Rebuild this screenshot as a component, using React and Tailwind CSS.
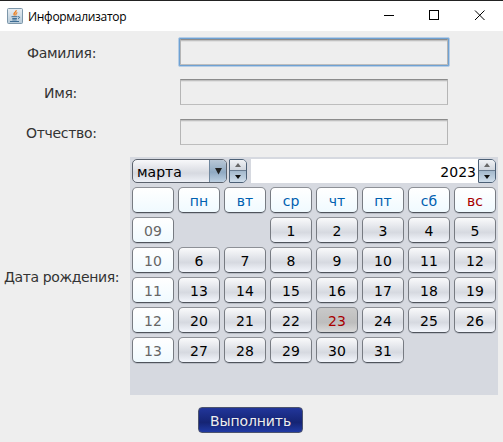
const FONT = "font-['DejaVu_Sans',Verdana,sans-serif]";

const BTN =
  "flex h-[26px] w-[42px] items-center justify-center rounded-[5px] border border-t-[#8d9096] border-x-[#777b82] border-b-[#4f545c] pt-[2px] text-[14px] leading-none shadow-[0_1px_0_#b9bdc5]";
const PALE = "bg-gradient-to-b from-white to-[#f0faff]";
const SILVER = "bg-[linear-gradient(#fafafb_0%,#e5e7ec_35%,#d6d9e0_60%,#f3f6fc_100%)]";
const SELECTED = "bg-[linear-gradient(#c9c9c9_0%,#bdbdbd_60%,#dadada_100%)]";

const days = ["пн", "вт", "ср", "чт", "пт", "сб", "вс"];
const weeks = [
  ["09", "", "", 1, 2, 3, 4, 5],
  ["10", 6, 7, 8, 9, 10, 11, 12],
  ["11", 13, 14, 15, 16, 17, 18, 19],
  ["12", 20, 21, 22, 23, 24, 25, 26],
  ["13", 27, 28, 29, 30, 31, "", ""],
];

function JavaIcon() {
  return (
    <svg width="16" height="16" viewBox="0 0 16 16">
      <defs>
        <linearGradient id="tile" x1="0" y1="0" x2="0" y2="1">
          <stop offset="0" stopColor="#e8eef3" />
          <stop offset="1" stopColor="#b5c9d8" />
        </linearGradient>
      </defs>
      <rect x=".5" y=".5" width="15" height="15" rx="1" fill="url(#tile)" stroke="#7d97aa" />
      <path d="M9.200 2.200C9.800 4.200 5.200 4.800 7.500 7.500M10.300 4.500C8.500 5.300 8.700 6.200 8.800 7.500" fill="none" stroke="#ef7d1a" strokeWidth="1.2" />
      <path d="M4.500 8.700h6M5.300 10.500h4.600M5.300 11.900h4.400M3 13.500h9M11 8.800c2-.7 2.300 1.200 0 2" fill="none" stroke="#3e6d94" />
    </svg>
  );
}

function Spinner() {
  return (
    <div className="flex h-6 w-[18px] flex-col overflow-hidden rounded-r-[5px] rounded-l-[1px] border border-[#4c6076]">
      <div className="flex h-[11px] items-center justify-center border-b border-[#6b7d91] bg-gradient-to-b from-[#f0f2f5] to-[#d0d6de]">
        <svg width="6" height="4"><path d="M3 0L6 4H0Z" fill="#686868" /></svg>
      </div>
      <div className="flex flex-1 items-center justify-center bg-gradient-to-b from-[#a3b8cc] to-[#cfdeeb]">
        <svg width="6" height="4"><path d="M0 0H6L3 4Z" fill="#111" /></svg>
      </div>
    </div>
  );
}

function Field({ label, focused, labelClass }) {
  return (
    <div className="flex h-10 items-center">
      <div className={"w-[178px] shrink-0 pt-[2px] text-[14px] leading-5 tracking-[-0.3px] " + labelClass}>{label}</div>
      <div className={focused ? "rounded-[2px] border border-[#b5cde6] bg-[#6fa1d2] p-px" : "p-[2px]"}>
        <div className="h-[26px] w-[268px] border border-t-[#8b8b8b] border-x-[#b5b5b5] border-b-[#bdbdbd] bg-[#eee] shadow-[inset_0_1px_0_#c0c0c0,inset_0_2px_0_#e0e0e0]" />
      </div>
    </div>
  );
}

export default function App() {
  return (
    <div className={"flex h-[442px] w-[503px] flex-col overflow-hidden bg-[#eee] text-[#333] " + FONT}>
      <header className="flex h-[31px] shrink-0 items-center border-t border-[#222] bg-white pl-[7px] text-black">
        <JavaIcon />
        <span className="ml-[5px] w-[100px] whitespace-nowrap pt-px font-['Open_Sans','Noto_Sans',sans-serif] text-[12px] tracking-[-0.3px]">Информализатор</span>
        <svg className="ml-auto" width="119" height="30" shapeRendering="crispEdges">
          <path d="M0 14.500H10M45.500 9.500h9v9h-9Z" fill="none" stroke="#000" />
          <path d="M91 9.500l9.500 9.500M100.500 9.500L91 19" fill="none" stroke="#000" shapeRendering="auto" />
        </svg>
      </header>
      <section className="flex h-[126px] shrink-0 flex-col pt-[1px]">
        <Field label="Фамилия:" focused labelClass="pl-[27px]" />
        <Field label="Имя:" labelClass="pl-[44px]" />
        <Field label="Отчество:" labelClass="pl-[26px]" />
      </section>
      <section className="flex h-[238px] shrink-0 items-center">
        <div className="w-[130px] whitespace-nowrap pt-[2px] pl-1 text-[14px] tracking-[-0.38px]">Дата рождения:</div>
        <div className="h-[238px] w-[368px] bg-[#d6d9e0] pt-0.5 pl-0.5 text-black">
          <div className="flex h-[24px]">
            <div className="flex h-6 w-[95px] overflow-hidden rounded-[5px] border border-[#5b626d] bg-[linear-gradient(#f8f8fa,#d6d9e0_60%,#eef1f7)]">
              <div className="flex flex-1 items-center pt-[2px] pl-1 text-[14px]">марта</div>
              <div className="flex w-[17px] justify-center border-l border-[#70879e] bg-[linear-gradient(#b9c8d7,#8fa9c2_55%,#bdd0e2)] pt-[8px]">
                <svg width="7" height="7"><path d="M0 0H7L3.500 6.500Z" fill="#222" /></svg>
              </div>
            </div>
            <div className="ml-0.5"><Spinner /></div>
            <div className="ml-1 flex w-[227px] items-center justify-end bg-white pt-[2px] pr-[2px] text-[14px]">2023</div>
            <Spinner />
          </div>
          <div className="mt-1 grid grid-cols-[repeat(8,42px)] gap-x-1 gap-y-1">
            <div className={BTN + " " + PALE} />
            {days.map((d) => (
              <div key={d} className={BTN + " " + PALE + (d === "вс" ? " text-[#a80000]" : " text-[#0060b0]")}>{d}</div>
            ))}
            {weeks.flatMap((week) =>
              week.map((d, i) =>
                d === "" ? (
                  <div key={week[0] + i} />
                ) : (
                  <div
                    key={week[0] + i}
                    className={BTN + " " + (i === 0 ? PALE + " text-[#666]" : d === 23 ? SELECTED + " text-[#a80000]" : SILVER)}
                  >
                    {d}
                  </div>
                )
              )
            )}
          </div>
        </div>
      </section>
      <footer className="flex pt-3 pl-[198px]">
        <button className="h-[26px] w-[105px] rounded-[4px] border border-[#4c536d] bg-[linear-gradient(#22369a,#152474_60%,#203aa4)] pt-[2px] text-[14px] leading-none tracking-[-0.1px] text-[#eee]">Выполнить</button>
      </footer>
    </div>
  );
}
